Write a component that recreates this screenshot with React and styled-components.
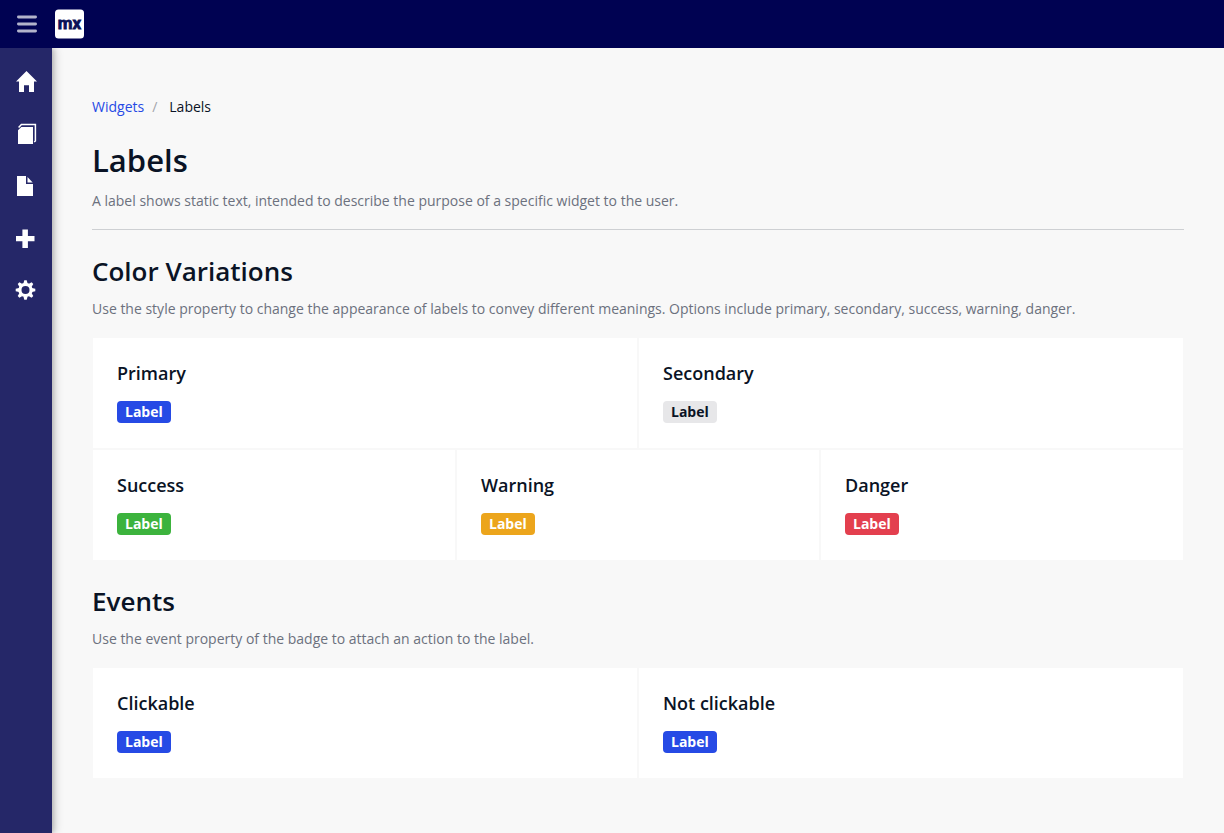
import React from "react";
import styled, { createGlobalStyle } from "styled-components";

const GlobalStyle = createGlobalStyle`
  *, *::before, *::after { box-sizing: border-box; }
  body {
    margin: 0;
    background: #f8f8f8;
    color: #0a1325;
    font-family: "Open Sans", "Liberation Sans", sans-serif;
    font-size: 14px;
    line-height: 20px;
  }
`;

const Page = styled.div`
  display: flex;
  flex-direction: column;
  min-height: 100vh;
`;

const Topbar = styled.header`
  display: flex;
  align-items: center;
  height: 48px;
  padding-left: 12px;
  gap: 13px;
  background: #000252;
`;

const MenuButton = styled.button`
  display: flex;
  align-items: center;
  justify-content: center;
  width: 30px;
  height: 32px;
  padding: 0;
  border: 0;
  background: none;
  cursor: pointer;
`;

const Logo = styled.a`
  display: flex;
  width: 29px;
  height: 30px;
`;

const Body = styled.div`
  display: flex;
  flex: 1;
`;

const Sidebar = styled.nav`
  display: flex;
  flex-direction: column;
  flex: none;
  width: 52px;
  padding-top: 8px;
  background: #252768;
  box-shadow: 2px 0 4px rgba(0, 0, 0, 0.14), 4px 0 8px rgba(0, 0, 0, 0.14);
  clip-path: inset(0 -16px 0 0);
`;

const NavLink = styled.a`
  display: flex;
  align-items: center;
  justify-content: center;
  height: 52px;
`;

const Content = styled.main`
  flex: 1;
  min-width: 0;
  padding: 49px 40px 40px;
`;

const Breadcrumb = styled.ol`
  display: flex;
  gap: 8px;
  margin: 0 0 24px;
  padding: 0;
  list-style: none;
`;

const Crumb = styled.li`
  display: flex;
  gap: 12px;

  &:not(:first-child)::before {
    content: "/";
    color: #a3a5ab;
  }
`;

const CrumbLink = styled.a`
  color: #264ae5;
  text-decoration: none;
`;

const PageTitle = styled.h1`
  margin: 0 0 12px;
  font-size: 31px;
  font-weight: 600;
  line-height: 38px;
`;

const SectionTitle = styled.h2`
  margin: 0 0 12px;
  font-size: 26px;
  font-weight: 600;
  line-height: 32px;
`;

const Intro = styled.p`
  margin: 0;
  color: #6c717e;
`;

const PageHeader = styled.header`
  padding-bottom: 18px;
  border-bottom: 1px solid #ced0d3;
`;

const Section = styled.section`
  margin-top: 25px;
`;

const Cards = styled.div`
  display: flex;
  flex-direction: column;
  gap: 2px;
  margin: 19px 1px 0;
`;

const CardRow = styled.div`
  display: grid;
  grid-template-columns: repeat(${(p) => p.$columns}, 1fr);
  gap: 2px;
`;

const Card = styled.article`
  display: flex;
  flex-direction: column;
  align-items: flex-start;
  padding: 23px 24px 25px;
  background: #fff;
`;

const CardTitle = styled.h3`
  margin: 0 0 16px;
  font-size: 18px;
  font-weight: 600;
  line-height: 24px;
`;

const Badge = styled.span`
  padding: 1px 8px;
  border-radius: 4px;
  background: ${(p) => p.$background};
  color: ${(p) => p.$color || "#fff"};
  font-weight: 700;
  line-height: 20px;
`;

const ClickableBadge = styled(Badge).attrs({ as: "button", type: "button" })`
  border: 0;
  font-family: inherit;
  font-size: inherit;
  cursor: pointer;
`;

const navItems = [
  {
    label: "Home",
    icon: (
      <path d="M14.5 3 L25 13.5 H22 V24 H17 V17.3 H12 V24 H7 V13.5 H4 Z" />
    ),
  },
  {
    label: "Layouts",
    icon: (
      <>
        <path d="M9.3 7 H21 V24 H6 V10.3 Z" />
        <path d="M6.6 7.6 L9.4 4.6 H23.4 V21 L22.2 22" fill="none" stroke="#fff" strokeWidth="1.5" />
      </>
    ),
  },
  {
    label: "Pages",
    icon: (
      <>
        <path d="M5 4 H14 V12 H21 V24 H5 Z" />
        <path d="M15.5 5 L20.7 10.5 H15.5 Z" />
      </>
    ),
  },
  {
    label: "Widgets",
    icon: <path d="M10.4 5.5 H15.9 V12 H22.5 V17.2 H15.9 V24 H10.4 V17.2 H4 V12 H10.4 Z" />,
  },
  {
    label: "Settings",
    icon: (
      <g transform="translate(13.5 14)">
        <circle r="5.6" fill="none" stroke="#fff" strokeWidth="3.2" />
        {[0, 45, 90, 135, 180, 225, 270, 315].map((angle) => (
          <path key={angle} d="M-2.1 -6.4 L-1.2 -9.8 H1.2 L2.1 -6.4 Z" transform={`rotate(${angle})`} />
        ))}
      </g>
    ),
  },
];

const sections = [
  {
    title: "Color Variations",
    intro:
      "Use the style property to change the appearance of labels to convey different meanings. Options include primary, secondary, success, warning, danger.",
    rows: [
      [
        { title: "Primary", background: "#264ae5" },
        { title: "Secondary", background: "#e7e7e9", color: "#0a1325" },
      ],
      [
        { title: "Success", background: "#3cb33d" },
        { title: "Warning", background: "#eca51c" },
        { title: "Danger", background: "#e33f4e" },
      ],
    ],
  },
  {
    title: "Events",
    intro: "Use the event property of the badge to attach an action to the label.",
    rows: [
      [
        { title: "Clickable", background: "#264ae5", clickable: true },
        { title: "Not clickable", background: "#264ae5" },
      ],
    ],
  },
];

export default function App() {
  return (
    <Page>
      <GlobalStyle />
      <Topbar>
        <MenuButton type="button" aria-label="Toggle menu">
          <svg width="20" height="18" viewBox="0 0 20 18" fill="#b2b3cb" aria-hidden="true">
            <rect y="0.5" width="20" height="2.9" rx="1.4" />
            <rect y="7.5" width="20" height="2.9" rx="1.4" />
            <rect y="14.6" width="20" height="2.9" rx="1.4" />
          </svg>
        </MenuButton>
        <Logo href="#home" aria-label="Home page">
          <svg width="29" height="30" viewBox="0 0 29 30" aria-hidden="true">
            <rect y="0.5" width="29" height="29" rx="3.5" fill="#fff" />
            <text
              x="14.5"
              y="20"
              textAnchor="middle"
              fill="#0a1157"
              stroke="#0a1157"
              strokeWidth="0.8"
              fontFamily="Roboto, 'Open Sans', sans-serif"
              fontWeight="700"
              fontSize="17"
            >
              mx
            </text>
          </svg>
        </Logo>
      </Topbar>
      <Body>
        <Sidebar aria-label="Main">
          {navItems.map((item) => (
            <NavLink key={item.label} href={`#${item.label.toLowerCase()}`} aria-label={item.label}>
              <svg width="28" height="28" viewBox="0 0 28 28" fill="#fff" aria-hidden="true">
                {item.icon}
              </svg>
            </NavLink>
          ))}
        </Sidebar>
        <Content>
          <nav aria-label="Breadcrumb">
            <Breadcrumb>
              <Crumb>
                <CrumbLink href="#widgets">Widgets</CrumbLink>
              </Crumb>
              <Crumb aria-current="page">Labels</Crumb>
            </Breadcrumb>
          </nav>
          <PageHeader>
            <PageTitle>Labels</PageTitle>
            <Intro>
              A label shows static text, intended to describe the purpose of a specific widget to the user.
            </Intro>
          </PageHeader>
          {sections.map((section) => (
            <Section key={section.title}>
              <SectionTitle>{section.title}</SectionTitle>
              <Intro>{section.intro}</Intro>
              <Cards>
                {section.rows.map((row, index) => (
                  <CardRow key={index} $columns={row.length}>
                    {row.map((card) => {
                      const Label = card.clickable ? ClickableBadge : Badge;
                      return (
                        <Card key={card.title}>
                          <CardTitle>{card.title}</CardTitle>
                          <Label $background={card.background} $color={card.color}>
                            Label
                          </Label>
                        </Card>
                      );
                    })}
                  </CardRow>
                ))}
              </Cards>
            </Section>
          ))}
        </Content>
      </Body>
    </Page>
  );
}
